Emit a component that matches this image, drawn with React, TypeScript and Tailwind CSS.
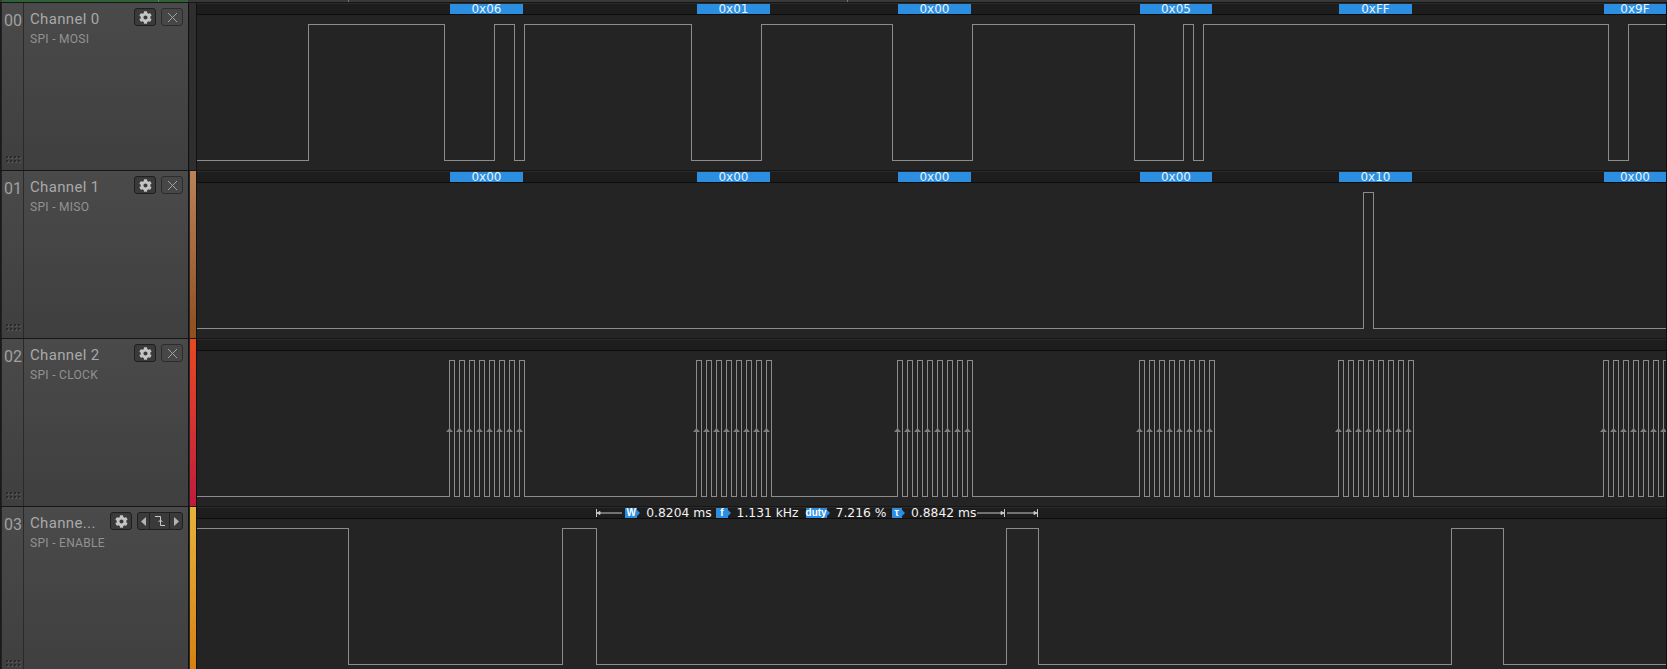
import { FaCog } from "react-icons/fa";

const SANS = "font-['Roboto','Liberation_Sans',sans-serif]";
const MONO_ISH = "font-['DejaVu_Sans',sans-serif]";

const HIGH = 22.5;
const LOW = 158.5;

type Bubble = { x: number; w: number; label: string };

// byte decode bubbles, x is page coordinate
const bursts = [449.5, 696.5, 897.5, 1139.5, 1338.5, 1603.5];

const mosi: Bubble[] = [
  { x: 450, w: 73, label: "0x06" },
  { x: 697, w: 73, label: "0x01" },
  { x: 898, w: 73, label: "0x00" },
  { x: 1140, w: 72, label: "0x05" },
  { x: 1339, w: 73, label: "0xFF" },
  { x: 1604, w: 62, label: "0x9F" },
];

const miso: Bubble[] = [
  { x: 450, w: 73, label: "0x00" },
  { x: 697, w: 73, label: "0x00" },
  { x: 898, w: 73, label: "0x00" },
  { x: 1140, w: 72, label: "0x00" },
  { x: 1339, w: 73, label: "0x10" },
  { x: 1604, w: 62, label: "0x00" },
];

const clockEdges = bursts.flatMap((b) =>
  [0, 1, 2, 3, 4, 5, 6, 7].flatMap((i) => [b + i * 10, b + i * 10 + 5])
);

function wavePath(startHigh: boolean, edges: number[]) {
  let level = startHigh;
  let d = `M197 ${level ? HIGH : LOW}`;
  for (const x of edges) {
    level = !level;
    d += ` H${x} V${level ? HIGH : LOW}`;
  }
  return d + " H1666";
}

const channels = [
  {
    num: "00",
    name: "Channel 0",
    sub: "SPI - MOSI",
    strip: "from-[#2f2f2f] to-[#2f2f2f]",
    bubbles: mosi,
    d: wavePath(false, [
      308.5, 444.5, 494.5, 514.5, 524.5, 691.5, 761.5, 892.5, 972.5, 1134.5, 1183.5, 1193.5,
      1203.5, 1608.5, 1628.5,
    ]),
  },
  {
    num: "01",
    name: "Channel 1",
    sub: "SPI - MISO",
    strip: "from-[#b98258] to-[#8f4f1e]",
    bubbles: miso,
    d: wavePath(false, [1363.5, 1373.5]),
  },
  {
    num: "02",
    name: "Channel 2",
    sub: "SPI - CLOCK",
    strip: "from-[#e8481f] to-[#c01a3c]",
    bubbles: [],
    d: wavePath(false, clockEdges),
    arrows: true,
  },
  {
    num: "03",
    name: "Channe...",
    sub: "SPI - ENABLE",
    strip: "from-[#e6b23a] to-[#d67f0c]",
    bubbles: [],
    d: wavePath(true, [348.5, 562.5, 596.5, 1006.5, 1038.5, 1451.5, 1503.5]),
    measure: true,
    triggered: true,
  },
];

function GearButton() {
  return (
    <button className="flex h-[18px] w-[22px] items-center justify-center rounded-[3px] border border-[#1f1f1f] bg-[#3a3a3a]">
      <FaCog className="h-[13px] w-[13px] text-[#c4c4c4]" />
    </button>
  );
}

function CloseButton() {
  return (
    <button className="flex h-[18px] w-[22px] items-center justify-center rounded-[3px] border border-[#2c2c2c] bg-[#474747]">
      <svg width="11" height="11" viewBox="0 0 11 11" stroke="#a2a2a2" strokeWidth="1" fill="none">
        <path d="M1 1 L10 10 M10 1 L1 10" />
      </svg>
    </button>
  );
}

function TriggerGroup() {
  return (
    <div className="flex h-[18px] w-[46px] rounded-[3px] border border-[#1f1f1f] bg-[#3a3a3a]">
      <div className="flex w-[12px] items-center justify-center border-r border-[#222]">
        <svg width="5" height="9" viewBox="0 0 5 9" fill="#b4b4b4">
          <path d="M5 0 V9 L0 4.5 Z" />
        </svg>
      </div>
      <div className="flex flex-1 items-center justify-center border-r border-[#222]">
        <svg width="11" height="12" viewBox="0 0 11 12" fill="none" stroke="#c8c8c8" strokeWidth="1">
          <path d="M1 1.5 H6.5 V10.5 H11" />
          <path d="M4.5 7 L6.5 5 L8.5 7" />
        </svg>
      </div>
      <div className="flex w-[12px] items-center justify-center">
        <svg width="5" height="9" viewBox="0 0 5 9" fill="#b4b4b4">
          <path d="M0 0 V9 L5 4.5 Z" />
        </svg>
      </div>
    </div>
  );
}

function Grip() {
  const dots = [0, 4, 8, 12];
  return (
    <svg width="15" height="7" viewBox="0 0 15 7" className="ml-[4px] mb-[7px]">
      {[0, 4].map((y) =>
        dots.map((x) => (
          <g key={`${x}-${y}`}>
            <rect x={x + 1} y={y + 1} width="2" height="2" fill="#5e5e5e" opacity="0.7" />
            <rect x={x} y={y} width="2" height="2" fill="#2b2b2b" />
          </g>
        ))
      )}
    </svg>
  );
}

function Tag({ label, className }: { label: string; className: string }) {
  return (
    <span
      className={`relative flex h-[10px] items-center justify-center bg-[#2b8ee0] font-['Liberation_Sans',sans-serif] text-[10px] font-bold leading-none text-white ${className}`}
    >
      {label}
      <span className="absolute left-full top-[2px] h-0 w-0 border-y-[3px] border-l-[3px] border-y-transparent border-l-[#2b8ee0]" />
    </span>
  );
}

function MeasureBar() {
  return (
    <div
      className={`absolute left-[399px] top-0 flex h-[10px] w-[443px] items-center text-[12.3px] leading-none text-[#f2f2f2] ${MONO_ISH}`}
    >
      <svg width="26" height="8" viewBox="0 0 26 8" stroke="#c8c8c8" fill="none" className="shrink-0">
        <path d="M0.5 0 V8 M1 4 H26" />
        <path d="M1 4 L4 2.5 V5.5 Z" fill="#c8c8c8" />
      </svg>
      <Tag label="W" className="ml-[3px] w-[13px]" />
      <span className="ml-[9px] w-[65px] shrink-0 whitespace-nowrap">0.8204 ms</span>
      <Tag label="f" className="ml-[5px] w-[12px]" />
      <span className="ml-[9px] w-[64px] shrink-0 whitespace-nowrap">1.131 kHz</span>
      <Tag label="duty" className="ml-[5px] w-[21px]" />
      <span className="ml-[9px] w-[53px] shrink-0 whitespace-nowrap">7.216 %</span>
      <Tag label="τ" className="ml-[3px] w-[11px]" />
      <span className="ml-[9px] w-[66px] shrink-0 whitespace-nowrap">0.8842 ms</span>
      <svg width="28" height="8" viewBox="0 0 28 8" stroke="#c8c8c8" fill="none" className="shrink-0">
        <path d="M0 4 H27 M27.5 0 V8" />
        <path d="M27 4 L24 2.5 V5.5 Z" fill="#c8c8c8" />
      </svg>
      <svg width="32" height="8" viewBox="0 0 32 8" stroke="#c8c8c8" fill="none" className="ml-[2px] shrink-0">
        <path d="M0 4 H30 M30.5 0 V8" />
        <path d="M30 4 L27 2.5 V5.5 Z" fill="#c8c8c8" />
      </svg>
    </div>
  );
}

export default function App() {
  return (
    <div className="flex h-[669px] w-[1667px] flex-col overflow-hidden bg-[#1a1a1a]">
      {/* top timeline strip */}
      <div className="relative flex h-[2px] shrink-0 bg-[#383838]">
        <div className="ml-[2px] h-full w-[186px] bg-[#2f6136]" />
        <div className="absolute left-[158px] top-0 h-[2px] w-px bg-[#777]" />
        <div className="absolute left-[348px] top-0 h-[2px] w-px bg-[#777]" />
        <div className="absolute left-[847px] top-0 h-[2px] w-px bg-[#777]" />
      </div>

      {channels.map((ch) => (
        <div key={ch.num} className="flex h-[168px] shrink-0 border-t border-[#161616]">
          {/* channel header */}
          <div className="ml-px flex w-[187px] shrink-0 border-l border-[#222] bg-linear-to-b from-[#4a4a4a] to-[#3f3f3f]">
            <div className="flex w-[22px] shrink-0 flex-col border-r border-[#2a2a2a]">
              <span className={`mt-[8px] pl-[2px] text-[16px] leading-[20px] text-[#a0a0a0] ${SANS}`}>
                {ch.num}
              </span>
              <div className="mt-auto">
                <Grip />
              </div>
            </div>
            <div className="min-w-0 flex-1 pl-[6px] pr-[5px] pt-[5px]">
              <div className="flex items-start justify-between">
                <span
                  className={`mt-[1px] text-[15px] leading-[20px] tracking-[0.35px] text-[#a8a8a8] ${SANS}`}
                >
                  {ch.name}
                </span>
                <div className="flex gap-[5px]">
                  <GearButton />
                  {ch.triggered ? <TriggerGroup /> : <CloseButton />}
                </div>
              </div>
              <div className={`mt-[3px] text-[12px] leading-[14px] tracking-[0.3px] text-[#929292] ${SANS}`}>
                {ch.sub}
              </div>
            </div>
          </div>

          {/* colour strip */}
          <div className="flex w-[9px] shrink-0 border-x border-[#111] bg-[#2a2a2a] pl-px">
            <div className={`w-[6px] bg-linear-to-b ${ch.strip}`} />
          </div>

          {/* signal area */}
          <div className="flex min-w-0 flex-1 flex-col border-r border-[#111] bg-[#242424]">
            <div className="h-px shrink-0 bg-[#2c2c2c]" />
            <div className="relative h-[10px] shrink-0 bg-[#1d1d1d]">
              {ch.bubbles.map((b) => (
                <div
                  key={b.x}
                  className={`absolute top-0 flex h-[10px] items-center justify-center bg-[#2b8ee0] text-[12px] leading-none text-[#e8f2fb] ${MONO_ISH}`}
                  style={{ left: b.x - 197, width: b.w }}
                >
                  {b.label}
                </div>
              ))}
              {ch.measure && <MeasureBar />}
            </div>
            <div className="h-px shrink-0 bg-[#0d0d0d]" />
            <svg
              width="1469"
              height="155"
              viewBox="197 13 1469 155"
              className="block shrink-0"
              fill="none"
            >
              <path d={ch.d} stroke="#8c8c8c" strokeWidth="1" shapeRendering="crispEdges" />
              {ch.arrows &&
                bursts.flatMap((b) =>
                  [0, 1, 2, 3, 4, 5, 6, 7].map((i) => {
                    const x = b + i * 10;
                    return (
                      <path
                        key={x}
                        d={`M${x - 3.5} 94 L${x} 90 L${x + 3.5} 94 Z`}
                        fill="#7e7e7e"
                      />
                    );
                  })
                )}
            </svg>
          </div>
        </div>
      ))}
    </div>
  );
}
